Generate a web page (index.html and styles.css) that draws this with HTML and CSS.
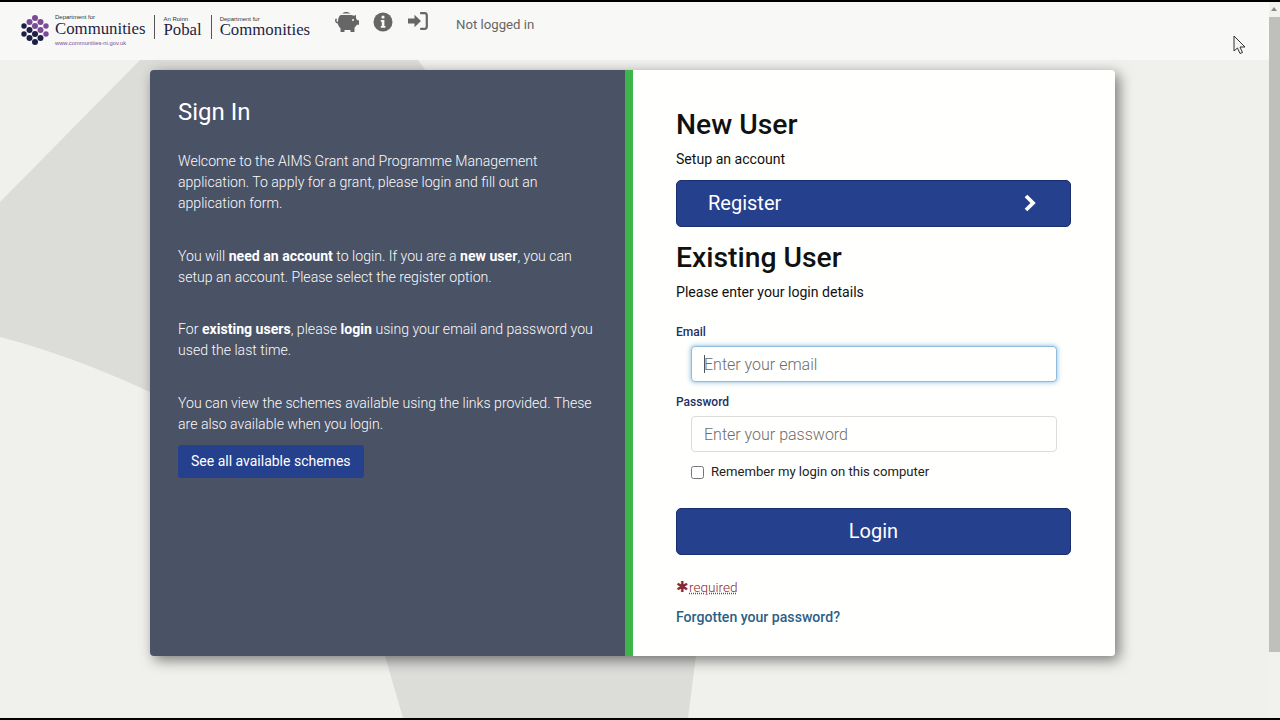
FILE: index.html
```html
<!DOCTYPE html>
<html lang="en">
<head>
    <meta charset="UTF-8">
    <meta name="viewport" content="width=device-width, initial-scale=1.0">
    <title>Sign In - AIMS</title>
    <link rel="stylesheet" href="styles.css">
</head>
<body>
    <div class="screen">
        <div class="page">
            <!-- Grey shape behind the card -->
            <svg class="backdrop" viewBox="0 0 1269 658" preserveAspectRatio="none">
                <path d="M140 0H418L440 30 696 596 688 658H403L385 596 330 430 150 332Q70 295 0 277V142Z" fill="#dcddd9"/>
            </svg>

            <header class="topbar">
                <div class="logos">
                    <svg class="logo-mark" viewBox="0 0 28 32">
                        <g fill="#7b4a97">
                            <circle cx="14" cy="4" r="3"/>
                            <circle cx="8.5" cy="8" r="3"/>
                            <circle cx="19.5" cy="8" r="3"/>
                            <circle cx="14" cy="12" r="3"/>
                            <circle cx="25" cy="12" r="2.7"/>
                            <circle cx="19.5" cy="16" r="3"/>
                            <circle cx="25" cy="20" r="2.7"/>
                        </g>
                        <g fill="#1d1f45">
                            <circle cx="3" cy="12" r="2.7"/>
                            <circle cx="8.5" cy="16" r="3"/>
                            <circle cx="3" cy="20" r="2.7"/>
                            <circle cx="14" cy="20" r="3"/>
                            <circle cx="8.5" cy="24" r="3"/>
                            <circle cx="19.5" cy="24" r="3"/>
                            <circle cx="14" cy="28" r="3"/>
                        </g>
                    </svg>
                    <div class="logo-block">
                        <span class="logo-small">Department for</span>
                        <span class="logo-big">Communities</span>
                        <span class="logo-url">www.communities-ni.gov.uk</span>
                    </div>
                    <div class="logo-block logo-split">
                        <span class="logo-small">An Roinn</span>
                        <span class="logo-big">Pobal</span>
                    </div>
                    <div class="logo-block logo-split">
                        <span class="logo-small">Department fur</span>
                        <span class="logo-big">Commonities</span>
                    </div>
                </div>
                <nav class="nav-icons">
                    <svg class="icon-pig" viewBox="0 0 24 20">
                        <path fill="#666" d="M11 0c2 0 3.600.6 4.400 1.500H7.200C8 .6 9.300 0 11 0zM6 3h10c1 0 2 .3 2.800.8L21 3v3.200c.6.6 1 1.300 1.200 2H24v4.600h-2.200c-.5 1-1.300 1.900-2.300 2.600V20h-4v-2H9.500v2h-4v-3.800C4 15 3 13.400 2.800 11.500 1.200 11.300 0 10 0 8.500 0 7.600.4 6.800 1 6.300l1 1.100c-.3.300-.5.600-.5 1.100 0 .7.500 1.300 1.300 1.500C3.300 6 4.300 3 6 3z"/>
                        <circle cx="18" cy="8" r="1" fill="#f8f9f6"/>
                    </svg>
                    <svg class="icon-info" viewBox="0 0 20 20">
                        <circle cx="10" cy="10" r="9.500" fill="#666"/>
                        <path fill="#f8f9f6" d="M8.600 3.800h2.800v2.600H8.600zM7.800 8h3.600v6h1v1.800H7.800V14h1v-4.200h-1z"/>
                    </svg>
                    <svg class="icon-login" viewBox="0 0 20 18">
                        <path fill="#666" d="M0 6.500h6.500V2.800L13 9l-6.500 6.200v-3.700H0z"/>
                        <path fill="none" stroke="#666" stroke-width="2.200" stroke-linecap="round" d="M13 1.200h3.500c1.300 0 2.300 1 2.300 2.300v11c0 1.300-1 2.300-2.300 2.300H13"/>
                    </svg>
                    <span class="login-state">Not logged in</span>
                </nav>
            </header>

            <main class="content">
                <div class="card">
                    <section class="intro">
                        <h2>Sign In</h2>
                        <p>Welcome to the AIMS Grant and Programme Management application. To apply for a grant, please login and fill out an application form.</p>
                        <p>You will <strong>need an account</strong> to login. If you are a <strong>new user</strong>, you can setup an account. Please select the register option.</p>
                        <p>For <strong>existing users</strong>, please <strong>login</strong> using your email and password you used the last time.</p>
                        <p class="tight">You can view the schemes available using the links provided. These are also available when you login.</p>
                        <a href="#" class="schemes-button">See all available schemes</a>
                    </section>

                    <section class="forms">
                        <h1>New User</h1>
                        <p class="lead">Setup an account</p>
                        <a href="#" class="big-button register-button">
                            Register
                            <svg class="chevron" viewBox="0 0 14 18">
                                <path fill="none" stroke="#fff" stroke-width="3.800" d="M3 2l7 7-7 7"/>
                            </svg>
                        </a>
                        <h1 class="existing">Existing User</h1>
                        <p class="lead">Please enter your login details</p>
                        <form>
                            <label class="field-label" for="email">Email</label>
                            <div class="field">
                                <input type="email" id="email" class="focused" placeholder="Enter your email">
                                <span class="caret"></span>
                            </div>
                            <label class="field-label" for="password">Password</label>
                            <div class="field">
                                <input type="password" id="password" placeholder="Enter your password">
                            </div>
                            <label class="remember">
                                <input type="checkbox">
                                <span>Remember my login on this computer</span>
                            </label>
                            <button type="button" class="big-button login-button">Login</button>
                        </form>
                        <div class="required"><span class="star">&#10033;</span><abbr title="required">required</abbr></div>
                        <a href="#" class="forgot">Forgotten your password?</a>
                    </section>
                </div>
            </main>

            <svg class="pointer" viewBox="0 0 14 20">
                <path fill="#f4f5f2" stroke="#333" stroke-width="1" d="M1 1v15l3.500-3 2.500 5.500 2.500-1-2.500-5.500H12z"/>
            </svg>
        </div>

        <div class="scrollbar">
            <div class="scroll-up"></div>
            <div class="scroll-thumb"></div>
        </div>
    </div>
</body>
</html>
```

FILE: styles.css
```css
* {
    margin: 0;
    padding: 0;
    box-sizing: border-box;
}

html, body {
    height: 100%;
    overflow: hidden;
}

body {
    background: #000;
    padding: 2px 0;
    font-family: Roboto, "Liberation Sans", sans-serif;
    color: #111;
}

.screen {
    display: flex;
    height: 716px;
}

.page {
    position: relative;
    flex: 1;
    background: #f0f1ed;
    overflow: hidden;
}

/* Decorative shape */
.backdrop {
    position: absolute;
    left: 0;
    top: 58px;
    width: 1269px;
    height: 658px;
}

/* Top bar */
.topbar {
    position: relative;
    display: flex;
    align-items: flex-start;
    height: 58px;
    background: #f8f9f6;
    padding: 11px 0 0 21px;
}

.logos {
    display: flex;
    align-items: flex-start;
    width: 313px;
}

.logo-mark {
    width: 28px;
    height: 32px;
    margin: 1px 6px 0 0;
}

.logo-block {
    display: flex;
    flex-direction: column;
    font-family: "Liberation Serif", serif;
    color: #1d1f45;
}

.logo-block .logo-big {
    margin-top: -1px;
}

.logo-split {
    border-left: 1px solid #555;
    height: 24px;
    margin: 2px 0 0 9px;
    padding-left: 8px;
}

.logo-split .logo-big {
    margin-top: -2px;
}

.logo-small {
    font-family: "Liberation Sans", sans-serif;
    font-size: 6px;
    line-height: 8px;
    height: 7px;
    color: #333;
}

.logo-big {
    font-size: 16.800px;
    line-height: 19px;
    white-space: nowrap;
}

.logo-url {
    font-family: "Liberation Sans", sans-serif;
    font-size: 5.800px;
    line-height: 9px;
    margin-top: 1px;
    color: #7b4a97;
}

.nav-icons {
    display: flex;
    align-items: flex-start;
    margin-left: 1px;
}

.icon-pig {
    width: 24px;
    height: 20px;
    margin-top: -1px;
}

.icon-info {
    width: 20px;
    height: 20px;
    margin: -1px 0 0 14px;
}

.icon-login {
    width: 20px;
    height: 18px;
    margin: -1px 0 0 15px;
}

.login-state {
    margin: 3px 0 0 28px;
    font-size: 13.200px;
    line-height: 18px;
    color: #666;
}

/* Main card */
.content {
    position: relative;
    display: flex;
    justify-content: flex-start;
    padding: 10px 0 0 150px;
}

.card {
    display: flex;
    width: 965px;
    height: 586px;
    border-radius: 4px;
    overflow: hidden;
    box-shadow: 4px 4px 14px rgba(0, 0, 0, 0.5);
}

.intro {
    width: 483px;
    background: #4a5266;
    border-right: 8px solid #3db54a;
    padding: 27px 28px 0 28px;
    color: #fbfbfc;
    font-size: 14.100px;
    line-height: 21px;
    font-weight: 300;
}

.intro h2 {
    font-size: 24px;
    line-height: 30px;
    font-weight: 400;
    color: #fff;
    margin-bottom: 24px;
}

.intro p {
    margin-bottom: 31.500px;
}

.intro p.tight {
    margin-bottom: 10.500px;
}

.intro strong {
    font-weight: 700;
    color: #fff;
}

.schemes-button {
    display: inline-block;
    height: 33px;
    padding: 0 13px;
    background: #25408c;
    border-radius: 3px;
    color: #fff;
    font-size: 14px;
    font-weight: 400;
    line-height: 33px;
    text-decoration: none;
}

.forms {
    flex: 1;
    background: #fffffd;
    padding: 36px 44px 0 43px;
}

.forms h1 {
    font-size: 28.300px;
    line-height: 38px;
    font-weight: 500;
    color: #111;
}

.forms h1.existing {
    margin-top: 12px;
}

.lead {
    font-size: 14.100px;
    line-height: 20px;
    margin-top: 5px;
}

.big-button {
    display: flex;
    align-items: center;
    width: 395px;
    height: 47px;
    padding-bottom: 2px;
    background: #25408c;
    border: 1px solid #1a2f6e;
    border-radius: 5px;
    color: #fff;
    font-family: inherit;
    font-size: 20px;
    text-decoration: none;
}

.register-button {
    justify-content: space-between;
    margin-top: 11px;
    padding: 0 33px 2px 31px;
}

.chevron {
    width: 14px;
    height: 18px;
}

.login-button {
    justify-content: center;
    margin-top: 28px;
}

.field-label {
    display: block;
    margin-top: 23px;
    font-size: 12px;
    font-weight: 500;
    line-height: 14px;
    color: #1d2f66;
}

.field-label + .field + .field-label {
    margin-top: 13px;
}

.field {
    position: relative;
    margin: 7px 0 0 15px;
    width: 366px;
}

.field input {
    display: block;
    width: 100%;
    height: 36px;
    padding: 0 12px;
    border: 1px solid #dcdcd8;
    border-radius: 4px;
    background: #fffffd;
    font-family: inherit;
    font-size: 16px;
    font-weight: 300;
    color: #333;
    outline: none;
}

.field input::placeholder {
    color: #6c6c6c;
    opacity: 1;
}

.field input.focused {
    border-color: #8fbcdc;
    box-shadow: 0 0 4px 1px rgba(90, 160, 215, 0.55);
}

.caret {
    position: absolute;
    left: 13px;
    top: 9px;
    width: 1px;
    height: 18px;
    background: #555;
}

.remember {
    display: flex;
    align-items: center;
    gap: 7px;
    margin: 10px 0 0 15px;
    font-size: 13.100px;
    line-height: 18px;
    color: #222;
}

.remember span {
    position: relative;
    top: 1px;
}

.remember input {
    width: 13px;
    height: 13px;
    margin-top: 2px;
}

.required {
    display: flex;
    align-items: center;
    margin-top: 23px;
    font-size: 13.600px;
    line-height: 18px;
    color: #8a2a35;
}

.star {
    width: 13px;
    font-size: 15px;
}

.required abbr {
    text-decoration: underline dotted #555;
    font-weight: 300;
}

.forgot {
    display: block;
    margin-top: 12px;
    font-size: 14.100px;
    font-weight: 500;
    line-height: 18px;
    color: #2d5f86;
    text-decoration: none;
}

/* Scrollbar */
.scrollbar {
    width: 11px;
    background: #f1f1ee;
}

.scroll-up {
    height: 15px;
    position: relative;
}

.scroll-up::after {
    content: '';
    position: absolute;
    left: 2px;
    top: 5px;
    border-left: 3.500px solid transparent;
    border-right: 3.500px solid transparent;
    border-bottom: 4px solid #8a8a88;
}

.scroll-thumb {
    height: 635px;
    background: #bfc0bc;
}

/* Screen recording pointer */
.pointer {
    position: absolute;
    left: 1233px;
    top: 33px;
    width: 14px;
    height: 20px;
}
```
